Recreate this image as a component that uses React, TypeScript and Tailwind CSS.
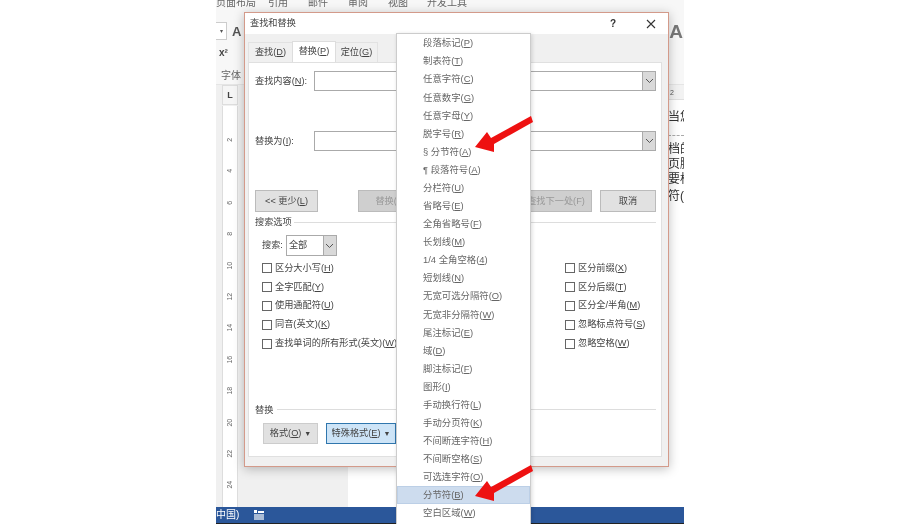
const font = "font-['Liberation_Sans','Noto_Sans_CJK_SC',sans-serif]";

const menuItems: [string, string][] = [
  ['段落标记(', 'P'],
  ['制表符(', 'T'],
  ['任意字符(', 'C'],
  ['任意数字(', 'G'],
  ['任意字母(', 'Y'],
  ['脱字号(', 'R'],
  ['§ 分节符(', 'A'],
  ['¶ 段落符号(', 'A'],
  ['分栏符(', 'U'],
  ['省略号(', 'E'],
  ['全角省略号(', 'F'],
  ['长划线(', 'M'],
  ['1/4 全角空格(', '4'],
  ['短划线(', 'N'],
  ['无宽可选分隔符(', 'O'],
  ['无宽非分隔符(', 'W'],
  ['尾注标记(', 'E'],
  ['域(', 'D'],
  ['脚注标记(', 'F'],
  ['图形(', 'I'],
  ['手动换行符(', 'L'],
  ['手动分页符(', 'K'],
  ['不间断连字符(', 'H'],
  ['不间断空格(', 'S'],
  ['可选连字符(', 'O'],
  ['分节符(', 'B'],
  ['空白区域(', 'W'],
];

function Key({ pre, k }: { pre: string; k: string }) {
  return (
    <span className="whitespace-nowrap">
      {pre}
      <span className="underline">{k}</span>)
    </span>
  );
}

function Check({ pre, k }: { pre: string; k: string }) {
  return (
    <div className="flex items-center h-[18.8px] gap-[3px]">
      <div className="w-[10px] h-[10px] border border-[#666] bg-white shrink-0" />
      <Key pre={pre} k={k} />
    </div>
  );
}

function Chevron() {
  return (
    <svg width="9" height="6" viewBox="0 0 9 6" fill="none" stroke="#555" strokeWidth="1">
      <path d="M1 1l3.5 3.5L8 1" />
    </svg>
  );
}

function ComboRow({ pre, k, mt }: { pre: string; k: string; mt: string }) {
  return (
    <div className={`flex items-center ${mt}`}>
      <div className="w-[59px] shrink-0 pt-[2px] text-[#444]">
        <Key pre={pre} k={k} />:
      </div>
      <div className="flex-1 h-[20px] border border-[#aaa] bg-white flex justify-end">
        <div className="w-[13px] bg-[#d9d9d9] border-l border-[#aaa] flex items-center justify-center">
          <Chevron />
        </div>
      </div>
    </div>
  );
}

function Arrow({ className }: { className: string }) {
  return (
    <svg className={`absolute left-[470px] w-[68px] h-[42px] ${className}`} viewBox="470 112 68 42">
      <polygon fill="#ee1111" points="475,147 487,132 491,138 531,116 533,122 494,144 494,152" />
    </svg>
  );
}

export default function App() {
  return (
    <div className={`relative w-[900px] h-[524px] bg-white overflow-hidden flex justify-center text-[9.2px] leading-none text-[#555] blur-[0.45px] ${font}`}>
      {/* Word window behind the dialog */}
      <div className="w-[468px] h-[524px] flex flex-col bg-white">
        <div className="h-[85px] bg-[#f7f7f7] border-b border-[#e5e5e5] overflow-hidden shrink-0">
          <div className="flex h-[8px] items-end text-[#666] text-[10px] whitespace-nowrap">
            <span className="w-[52px]">页面布局</span>
            <span className="w-[40px]">引用</span>
            <span className="w-[40px]">邮件</span>
            <span className="w-[40px]">审阅</span>
            <span className="w-[39px]">视图</span>
            <span>开发工具</span>
          </div>
          <div className="flex items-center h-[26px] mt-[10px]">
            <div className="w-[11px] h-[18px] bg-white border-y border-r border-[#ccc] flex items-center justify-center text-[6px]">▾</div>
            <span className="ml-[5px] text-[13px] text-[#555] font-bold">A</span>
            <span className="ml-auto mr-[1px] text-[#777] text-[19px] font-bold">A</span>
          </div>
          <div className="flex pt-[4px] pl-[3px] font-bold text-[10px] text-[#444]">x²</div>
          <div className="pt-[13px] pl-[5px] text-[10px] text-[#666]">字体</div>
        </div>
        <div className="flex-1 flex min-h-0">
          <div className="w-[132px] bg-[#f0f0f0] flex">
            <div className="ml-[6px] w-[16px] flex flex-col">
              <div className="h-[20px] shrink-0 bg-[#f5f5f5] border border-[#ddd] flex items-center justify-center text-[9px] font-bold text-[#444]">L</div>
              <div className="mt-[1px] flex-1 bg-white border-x border-[#ddd] flex flex-col items-center text-[7px] text-[#666] overflow-hidden">
                {['2', '4', '6', '8', '10', '12', '14', '16', '18', '20', '22', '24'].map((n, i) => (
                  <span key={n} className={`h-[31.4px] flex items-center justify-center -rotate-90 shrink-0 ${i === 0 ? 'mt-[18px]' : ''}`}>{n}</span>
                ))}
              </div>
            </div>
          </div>
          <div className="flex-1 flex flex-col items-end text-[#333] text-[12px]">
            <div className="w-[16px] overflow-hidden whitespace-nowrap leading-[15px]">
              <div className="h-[15px] bg-[#f2f2f2] border-b border-[#e0e0e0] text-[7px] text-[#555] leading-[15px] pl-[2px]">2</div>
              <div className="mt-[10px]">当您</div>
              <div className="mt-[10px] border-t border-dashed border-[#aaa] pt-[6px]">档的</div>
              <div>页脚</div>
              <div>要标</div>
              <div className="mt-[2px]">符(下</div>
            </div>
          </div>
        </div>
        <div className="h-[17px] shrink-0 bg-[#2b579a] border-b border-[#222] flex items-center text-white text-[10px] gap-[15px] pb-[1px]">
          <span>中国)</span>
          <svg width="10" height="10" viewBox="0 0 10 10" fill="#fff">
            <rect x="0" y="0" width="3" height="3" />
            <rect x="4" y="1" width="6" height="2" />
            <rect x="0" y="4" width="10" height="6" fillOpacity="0.6" />
          </svg>
        </div>
      </div>

      {/* Find and replace dialog */}
      <div className="absolute left-[244px] top-[12px] w-[425px] h-[455px] bg-[#f0f0f0] border border-[#d39a8a] shadow-[0_2px_10px_rgba(0,0,0,0.25)] flex flex-col">
        <div className="h-[21px] bg-white flex items-center pl-[5px] text-[#444] shrink-0">
          查找和替换
          <span className="ml-auto mr-[30px] text-[#333] text-[10px] font-bold">?</span>
          <svg className="mr-[12px]" width="10" height="10" viewBox="0 0 10 10" stroke="#333" strokeWidth="1.1">
            <path d="M1 1l8 8M9 1l-8 8" />
          </svg>
        </div>
        <div className="flex pl-[3px] h-[28px] shrink-0 items-end">
          <div className="w-[44px] h-[20px] flex items-center justify-center text-[#444] border-t border-l border-[#e2e2e2]"><Key pre="查找(" k="D" /></div>
          <div className="w-[44px] h-[21px] flex items-center justify-center text-[#444] bg-white border-x border-t border-[#ddd]"><Key pre="替换(" k="P" /></div>
          <div className="w-[42px] h-[20px] flex items-center justify-center text-[#444] border-t border-r border-[#e2e2e2]"><Key pre="定位(" k="G" /></div>
        </div>
        <div className="mx-[3px] w-[414px] h-[395px] bg-white border border-[#e0e0e0] pl-[6px] pr-[5px] flex flex-col shrink-0">
          <ComboRow pre="查找内容(" k="N" mt="mt-[8px]" />
          <ComboRow pre="替换为(" k="I" mt="mt-[40px]" />
          <div className="flex mt-[39px] h-[22px] text-[#444]">
            <div className="w-[63px] pt-[1px] bg-[#e1e1e1] border border-[#bbb] flex items-center justify-center"><Key pre="<< 更少(" k="L" /></div>
            <div className="ml-[40px] w-[66px] pt-[1px] bg-[#cfcfcf] border border-[#bbb] flex items-center justify-center text-[#999]">替换(R)</div>
            <div className="ml-auto mr-[8px] w-[72px] pt-[1px] bg-[#cfcfcf] border border-[#bbb] flex items-center justify-center text-[#999]">查找下一处(F)</div>
            <div className="w-[56px] pt-[1px] bg-[#e1e1e1] border border-[#bbb] flex items-center justify-center">取消</div>
          </div>
          <div className="flex items-center mt-[5px] h-[10px] text-[#444] gap-[2px]">
            <span className="pt-[2px]">搜索选项</span>
            <div className="flex-1 h-px bg-[#ddd]" />
          </div>
          <div className="flex items-center ml-[7px] mt-[8px] gap-[3px] text-[#444]">
            <span>搜索:</span>
            <div className="w-[51px] h-[21px] border border-[#aaa] flex items-center pl-[2px] justify-between">
              全部
              <div className="w-[13px] h-full bg-[#d9d9d9] border-l border-[#aaa] flex items-center justify-center"><Chevron /></div>
            </div>
          </div>
          <div className="flex ml-[7px] mt-[3px] text-[#444]">
            <div className="w-[303px] flex flex-col">
              <Check pre="区分大小写(" k="H" />
              <Check pre="全字匹配(" k="Y" />
              <Check pre="使用通配符(" k="U" />
              <Check pre="同音(英文)(" k="K" />
              <Check pre="查找单词的所有形式(英文)(" k="W" />
            </div>
            <div className="flex flex-col">
              <Check pre="区分前缀(" k="X" />
              <Check pre="区分后缀(" k="T" />
              <Check pre="区分全/半角(" k="M" />
              <Check pre="忽略标点符号(" k="S" />
              <Check pre="忽略空格(" k="W" />
            </div>
          </div>
          <div className="flex items-center mt-[52px] h-[10px] text-[#444] gap-[4px]">
            <span className="pt-[1px]">替换</span>
            <div className="flex-1 h-px bg-[#ddd]" />
          </div>
          <div className="flex ml-[8px] mt-[8px] gap-[8px] h-[21px] text-[#444]">
            <div className="w-[55px] bg-[#e1e1e1] border border-[#ccc] flex items-center justify-center gap-[3px]">
              <Key pre="格式(" k="O" />
              <span className="text-[7px]">▼</span>
            </div>
            <div className="w-[70px] bg-[#cde4f7] border border-[#2f76ad] flex items-center justify-center gap-[3px]">
              <Key pre="特殊格式(" k="E" />
              <span className="text-[7px]">▼</span>
            </div>
          </div>
        </div>
      </div>

      {/* Popup menu */}
      <div className="absolute left-[396px] top-[33px] w-[135px] h-[491px] bg-white border-x border-t border-[#ccc] shadow-[1px_1px_4px_rgba(0,0,0,0.15)] text-[#666] text-[9.4px]">
        {menuItems.map(([pre, k], i) => (
          <div
            key={i}
            className={`h-[18.08px] flex items-center ${k === 'B' ? 'pl-[25px] bg-[#cddcee] border border-[#bccfe6]' : 'pl-[26px]'}`}
          >
            <Key pre={pre} k={k} />
          </div>
        ))}
      </div>

      <Arrow className="top-[112px]" />
      <Arrow className="top-[461px]" />
    </div>
  );
}
